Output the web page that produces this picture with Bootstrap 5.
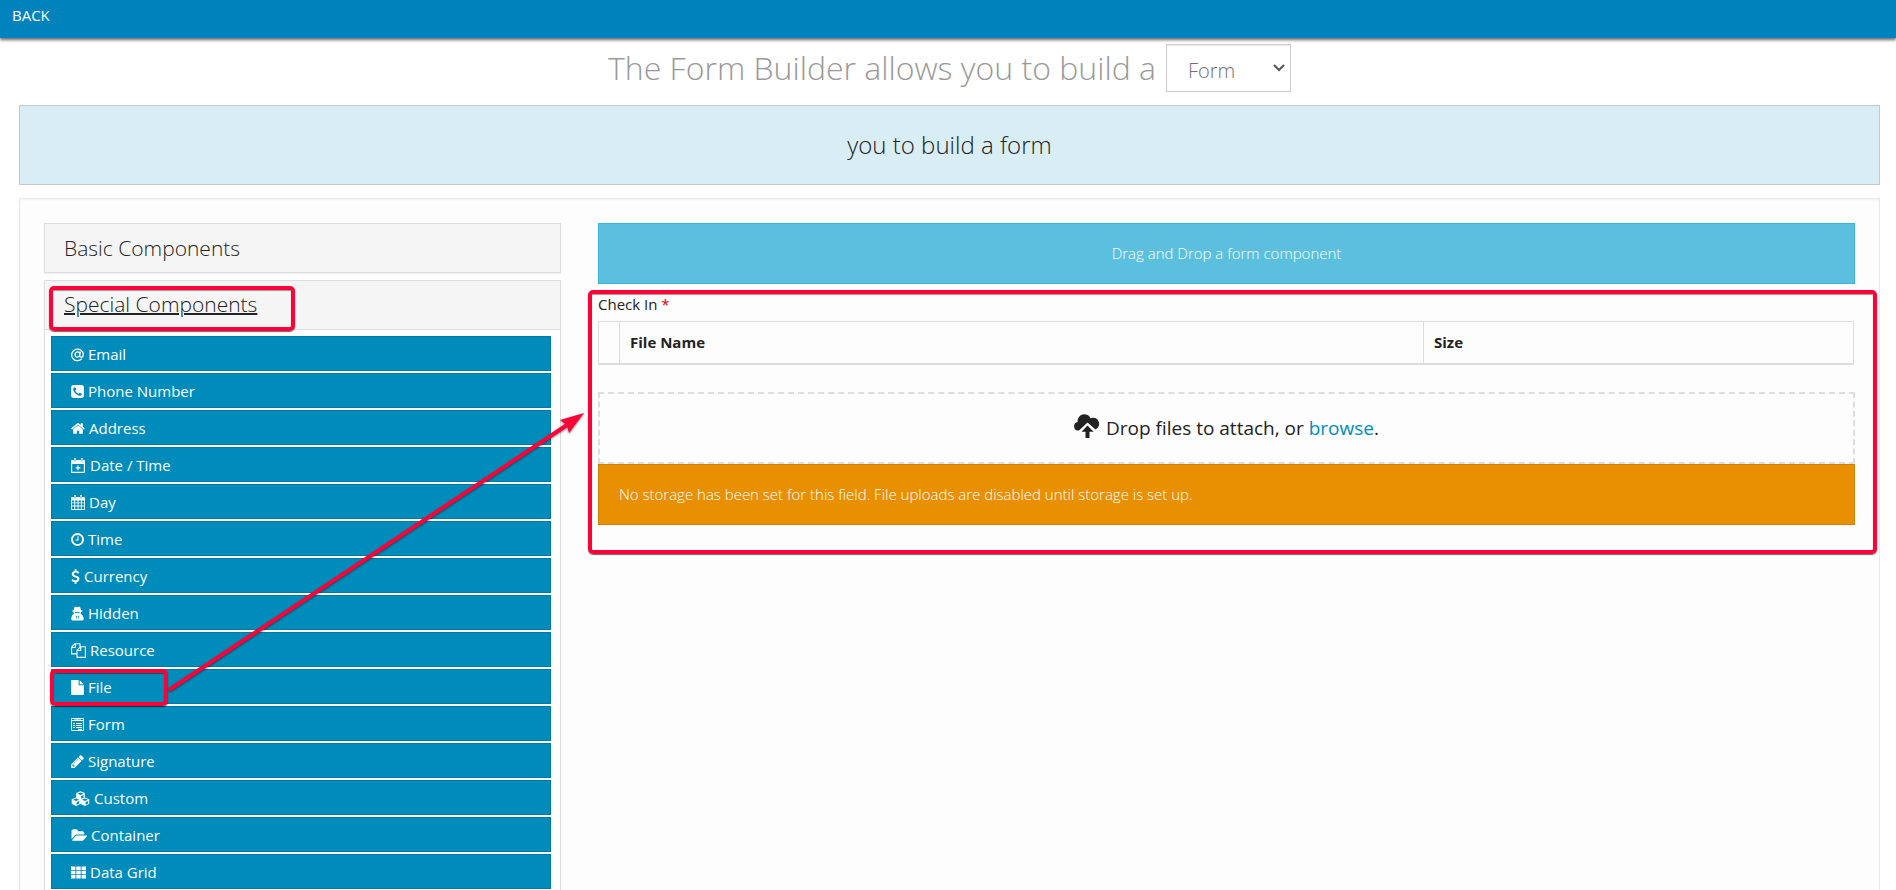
<!DOCTYPE html>
<html lang="en">
<head>
<meta charset="utf-8">
<meta name="viewport" content="width=device-width, initial-scale=1">
<title>Form Builder</title>
<link rel="stylesheet" href="https://cdn.jsdelivr.net/npm/bootstrap@5.3.0/dist/css/bootstrap.min.css">
<style>
body { font: 400 15px/21px "Open Sans", sans-serif; color: #222; background: #fff; }
.topbar { height: 38px; padding: 5px 12px; background: #0083bc; box-shadow: 0 2px 3px rgba(0,0,0,.6); }
.topbar a { color: #fff; font-size: 15px; }
.page-main { margin: 6px 16px 0 19px; }
.page-title { font-size: 32px; line-height: 48px; font-weight: 300; color: #999; gap: 10px; margin: 0; }
.kind-select { width: 125px; height: 48px; padding: 2px 21px 0; font-size: 20px; font-weight: 300; color: #6f6f6f; border: 1px solid #ccc; border-radius: 0; box-shadow: inset 0 1px 1px rgba(0,0,0,.08); appearance: none; background: #fff url("data:image/svg+xml,%3Csvg xmlns='http://www.w3.org/2000/svg' viewBox='0 0 12 8'%3E%3Cpath d='M1 1l5 5 5-5' fill='none' stroke='%23555' stroke-width='2'/%3E%3C/svg%3E") no-repeat right 5px center / 12px 8px; }
.kind-info { margin-top: 13px; height: 80px; padding-bottom: 2px; font-size: 24px; font-weight: 300; background: #d9edf5; border: 1px solid #c5c9cd; }
.builder { margin-top: 13px; padding: 24px; display: grid; grid-template-columns: 517fr 1257fr; gap: 37px; background: #fdfdfd; border: 1px solid #e8e8e8; box-shadow: inset 0 1px 2px rgba(0,0,0,.05); }
.group-box { border: 1px solid #ddd; background: #fff; box-shadow: 0 1px 1px rgba(0,0,0,.05); }
.group-box + .group-box { margin-top: 7px; }
.group-head { height: 48px; padding: 0 19px; background: #f5f5f5; }
.group-head button { padding: 0; border: 0; background: none; font-size: 21px; line-height: 30px; font-weight: 300; color: #222; }
.group-head.open { border-bottom: 1px solid #ddd; height: 49px; padding-bottom: 2px; }
.group-head.open button { text-decoration: underline; text-decoration-thickness: 2px; }
.group-list { padding: 6px 9px 6px 6px; gap: 2px; }
.comp { display: flex; align-items: center; gap: 4px; height: 35px; width: 100%; padding: 2px 19px 0; border: 1px solid #0079a1; border-radius: 0; background: #008cba; color: #fff; text-align: left; }
.comp svg { height: 15px; flex: none; fill: currentColor; }
.w9 { width: 9px; } .w13 { width: 13px; } .w14 { width: 14px; } .w15 { width: 15px; } .w16 { width: 16px; } .w19 { width: 19px; }
.line-art { fill: none; stroke: #fff; }
.notice { height: 61px; padding: 0 20px; font-weight: 300; color: #fff; }
.drop-zone { background: #5bc0de; border: 1px solid #3db5d8; }
.warn-zone { background: #e99002; border: 1px solid #d08002; }
.field-block { margin-top: 10px; }
.req { color: #eb0000; }
.file-table { margin: 6px 1px 27px 0; width: calc(100% - 1px); table-layout: fixed; border-collapse: collapse; border: 1px solid #ddd; }
.file-table th { border: 1px solid #ddd; border-bottom-width: 2px; height: 42px; padding: 0 10px; font-weight: 700; }
.file-table th:first-child { width: 21px; }
.file-table th:last-child { width: 430px; }
.attach { height: 72px; padding-top: 2px; border: 2px dashed #ddd; font-size: 19px; gap: 6px; }
.attach a { color: #008cba; text-decoration: none; }
.attach svg { width: 26px; height: 26px; margin-bottom: 5px; }
.callout { position: absolute; border: 4px solid #ff0039; border-radius: 5px; box-shadow: 0 1px 1px rgba(0,0,0,.6), inset 0 1px 1px rgba(0,0,0,.4); pointer-events: none; z-index: 3; }
.callout-head { left: 4px; top: 5px; width: 246px; height: 45px; }
.callout-file { left: -1px; top: 0; width: 118px; height: 37px; }
.callout-field { left: -10px; right: -22px; top: -4px; height: 264px; }
.callout-arrow { position: absolute; left: 111px; bottom: -5px; width: 430px; height: 300px; z-index: 3; pointer-events: none; filter: drop-shadow(0 1px 1px rgba(0,0,0,.5)); }
</style>
</head>
<body class="vh-100 overflow-hidden">
<svg class="d-none" aria-hidden="true">
  <symbol id="i-phone" viewBox="128 0 1536 1792"><path d="M1408 1193q0-11-2-16t-18-16.500-40.500-25-47.500-26.500-45.500-25-28.500-15q-5-3-19-13t-25-15-21-5q-15 0-36.500 20.500t-39.500 45-38.500 45-33.500 20.500q-7 0-16.500-3.500t-15.500-6.500-17-9.500-14-8.500q-99-55-170-126.500t-127-170.500q-2-3-8.500-14t-9.500-17-6.500-15.500-3.500-16.500q0-13 20.500-33.500t45-38.500 45-39.500 20.500-36.500q0-10-5-21t-15-25-13-19q-3-6-15-28.500t-25-45.500-26.500-47.500-25-40.500-16.500-18-16-2q-48 0-101 22-46 21-80 94.500t-34 130.500q0 16 2.500 34t5 30.500 9 33 10 29.500 12.500 33 11 30q60 164 216.500 320.500t320.500 216.500q6 2 30 11t33 12.500 29.500 10 33 9 30.500 5 34 2.500q57 0 130.500-34t94.500-80q22-53 22-101zm256-777v960q0 119-84.500 203.500t-203.500 84.500h-960q-119 0-203.500-84.500t-84.500-203.500v-960q0-119 84.500-203.500t203.500-84.500h960q119 0 203.500 84.500t84.500 203.500z"/></symbol>
  <symbol id="i-home" viewBox="64 0 1664 1792"><path d="M1472 992v480q0 26-19 45t-45 19h-384v-384h-256v384h-384q-26 0-45-19t-19-45v-480q0-1 .5-3t.5-3l575-474 575 474q1 2 1 6zm223-69l-62 74q-8 9-21 11h-3q-13 0-21-7l-692-577-692 577q-12 8-24 7-13-2-21-11l-62-74q-8-10-7-23.500t11-21.500l719-599q32-26 76-26t76 26l244 204v-195q0-14 9-23t23-9h192q14 0 23 9t9 23v408l219 182q10 8 11 21.500t-7 23.500z"/></symbol>
  <symbol id="i-clock" viewBox="128 0 1536 1792"><path d="M1024 544v448q0 14-9 23t-23 9h-320q-14 0-23-9t-9-23v-64q0-14 9-23t23-9h224v-352q0-14 9-23t23-9h64q14 0 23 9t9 23zm416 352q0-148-73-273t-198-198-273-73-273 73-198 198-73 273 73 273 198 198 273 73 273-73 198-198 73-273zm224 0q0 209-103 385.500t-279.500 279.500-385.500 103-385.500-103-279.500-279.500-103-385.500 103-385.500 279.500-279.500 385.500-103 385.500 103 279.500 279.500 103 385.500z"/></symbol>
  <symbol id="i-dollar" viewBox="384 0 1024 1792"><path d="M1362 1185q0 153-99.500 263.500t-258.500 136.500v175q0 14-9 23t-23 9h-135q-13 0-22.500-9.500t-9.500-22.500v-175q-66-9-127.500-31t-101.500-44.500-74-48-46.500-37.500-17.500-18q-17-21-2-41l103-135q7-10 23-12 15-2 24 9l2 2q113 99 243 125 37 8 74 8 81 0 142.500-43t61.500-122q0-28-15-53t-33.500-42-58.500-37.500-66-32-80-32.500q-39-16-61.500-25t-61.500-26.500-62.500-31-56.500-35.500-53.500-42.500-43.500-49-35.500-58-21-66.500-8.500-78q0-138 98-242t255-134v-180q0-13 9.500-22.500t22.500-9.500h135q14 0 23 9t9 23v176q57 6 110.500 23t87 33.500 63.500 37.500 39 29 15 14q17 18 5 38l-81 146q-8 15-23 16-14 3-27-7-3-3-14.500-12t-39-26.500-58.500-32-74.500-26-85.500-11.500q-95 0-155 43t-60 111q0 26 8.500 48t29.500 41.500 39.500 33 56 31 60.500 27 70 27.500q53 20 81 31.500t76 35 75.500 42.500 62 50 53 63.500 31.500 76.500 13 94z"/></symbol>
  <symbol id="i-file" viewBox="128 0 1536 1792"><path d="M1152 512v-472q22 14 36 28l408 408q14 14 28 36h-472zm-128 32q0 40 28 68t68 28h544v1056q0 40-28 68t-68 28h-1344q-40 0-68-28t-28-68v-1600q0-40 28-68t68-28h800v544z"/></symbol>
  <symbol id="i-pencil" viewBox="128 0 1536 1792"><path d="M491 1536l91-91-235-235-91 91v107h128v128h107zm523-928q0-22-22-22-10 0-17 7l-542 542q-7 7-7 17 0 22 22 22 10 0 17-7l542-542q7-7 7-17zm-54-192l416 416-832 832h-416v-416zm683 96q0 53-37 90l-166 166-416-416 166-165q36-38 90-38 53 0 91 38l235 234q37 39 37 91z"/></symbol>
  <symbol id="i-folder" viewBox="0 0 1943 1792"><path d="M1943 952q0 31-31 66l-336 396q-43 51-120.500 86.500t-143.500 35.500h-1088q-34 0-60.500-13t-26.500-43q0-31 31-66l336-396q43-51 120.500-86.500t143.500-35.500h1088q34 0 60.500 13t26.500 43zm-343-344v160h-832q-94 0-197 47.500t-164 119.500l-337 396-5 6q0-4-.5-12.500t-.5-12.500v-960q0-92 66-158t158-66h320q92 0 158 66t66 158v32h544q92 0 158 66t66 158z"/></symbol>
  <symbol id="i-at" viewBox="0 0 13 15"><path class="line-art" stroke-width="1.300" d="M10.800 11.800A5.800 5.800 0 1 1 12.300 7.500C12.300 9.200 11.300 10.200 10.200 10.200S8.500 9.400 8.700 8.500L9.400 4.700M8.900 7.100C8.900 9 7.700 10.200 6.200 10.200S3.900 9 4.100 7.600 5.300 4.900 6.800 4.900 9 5.900 8.900 7.100Z"/></symbol>
  <symbol id="i-plus" viewBox="0 0 15 15"><path fill-rule="evenodd" d="M1 2h2V.800Q3 0 4 0t1 .800V2h5V.800Q10 0 11 0t1 .800V2h1q1 0 1 1v11q0 1-1 1H1q-1 0-1-1V3q0-1 1-1zm.200 4v7.800h11.600V6zM3.600 1v2.500h.8V1zm7 0v2.500h.8V1zM6.400 7.500h1.200v1.800h1.800v1.200H7.600v1.800H6.400v-1.800H4.600V9.300h1.800z"/></symbol>
  <symbol id="i-cal" viewBox="0 0 14 15"><path fill-rule="evenodd" d="M1 2h2V.800Q3 0 4 0t1 .800V2h4V.800Q9 0 10 0t1 .800V2h2q1 0 1 1v11q0 1-1 1H1q-1 0-1-1V3q0-1 1-1zM3.600 1v2.500h.8V1zm6 0v2.500h.8V1zM1 5.500v2h2.300v-2zm3.200 0v2h2.400v-2zm3.300 0v2h2.400v-2zm3.300 0v2h2.300v-2zM1 8.300v2.300h2.300V8.300zm3.200 0v2.300h2.400V8.300zm3.300 0v2.300h2.400V8.300zm3.300 0v2.300h2.300V8.300zM1 11.500V14h2.300v-2.500zm3.200 0V14h2.400v-2.500zm3.300 0V14h2.400v-2.500zm3.300 0V14h2.300v-2.500z"/></symbol>
  <symbol id="i-secret" viewBox="0 0 13 15"><path fill-rule="evenodd" d="M4.600.800Q5.500 1.200 6.300 1.200T8 .800Q9 .300 9.500 2l.5 2q1.600.4 1.600.9 0 .5-1.600.9.100 1.100-.5 2.100 3 .8 3.200 5.100 0 1.400-1.500 1.400H1.600Q.200 14.400.200 13 .400 8.700 3 7.900 2.500 6.900 2.600 5.800 1 5.400 1 4.900t1.700-.9l.5-2Q3.600.300 4.600.800zM3.800 6l.4 1.200 1.600-.1.400-.8.500.8 1.600.1L8.700 6zm.700 3.200.9 4.200.5-2.900zm3.600 0L6.700 10.500l.6 2.900z"/></symbol>
  <symbol id="i-files" viewBox="0 0 15 15"><path class="line-art" stroke-width="1.100" stroke-linejoin="round" d="M6 10.900H.600V4.200L4 .7h5v3M4.300.800v3.700H.800M9.800 3.700h4.600v10.700H6V7.200zM9.700 3.900v3.600H6.200"/></symbol>
  <symbol id="i-form" viewBox="0 0 13 15"><path class="line-art" d="M.500 1.500h12v12H.500zM1 3.500h11M3 1.500l2 2 1.500-1.500L8 3.500l2-2M2 6.500h2m1 0h6M2 8.500h2m1 0h6M2 10.500h2m1 0h6M7 12.300h4"/></symbol>
  <symbol id="i-cubes" viewBox="0 0 19 15"><path fill-rule="evenodd" d="M9.500.300l4.300 1.800v4.300l4.500 1.800v4.600L14 15l-4.500-2L5 15 .7 12.800V8.200l4.500-1.800V2.100zM6.500 2.700l3 1.200 3-1.200-3-1.200zm3.600 2.500v2.500l2.400-1V4zM2 8.800l3 1.300 3-1.300-3-1.200zm3.600 2.500v2.500l2.500-1.200V10zm5.400-2.500l3 1.300 3-1.300-3-1.200zm3.600 2.500v2.500l2.500-1.200V10z"/></symbol>
  <symbol id="i-grid" viewBox="0 0 15 15"><path d="M0 1.500h4.400v3.400H0zm5.300 0h4.400v3.400H5.300zm5.300 0H15v3.400h-4.400zM0 5.800h4.400v3.400H0zm5.300 0h4.400v3.400H5.300zm5.300 0H15v3.400h-4.400zM0 10.100h4.400v3.400H0zm5.300 0h4.400v3.400H5.300zm5.300 0H15v3.400h-4.400z"/></symbol>
</svg>

<header class="topbar"><a href="#" class="text-decoration-none">BACK</a></header>

<main class="page-main">
  <h1 class="page-title d-flex justify-content-center"><label for="kind">The Form Builder allows you to build a</label>
    <select id="kind" class="kind-select"><option>Form</option><option>Wizard</option></select></h1>
  <div class="kind-info d-flex align-items-center justify-content-center">you to build a form</div>

  <section class="builder">
    <aside>
      <div class="group-box"><div class="group-head d-flex align-items-center"><button type="button">Basic Components</button></div></div>
      <div class="group-box position-relative">
        <div class="group-head open d-flex align-items-center"><button type="button">Special Components</button></div>
        <span class="callout callout-head"></span>
        <div class="group-list d-flex flex-column">
          <button class="comp" type="button"><svg class="w13"><use href="#i-at"/></svg>Email</button>
          <button class="comp" type="button"><svg class="w13"><use href="#i-phone"/></svg>Phone Number</button>
          <button class="comp" type="button"><svg class="w14"><use href="#i-home"/></svg>Address</button>
          <button class="comp" type="button"><svg class="w15"><use href="#i-plus"/></svg>Date / Time</button>
          <button class="comp" type="button"><svg class="w14"><use href="#i-cal"/></svg>Day</button>
          <button class="comp" type="button"><svg class="w13"><use href="#i-clock"/></svg>Time</button>
          <button class="comp" type="button"><svg class="w9"><use href="#i-dollar"/></svg>Currency</button>
          <button class="comp" type="button"><svg class="w13"><use href="#i-secret"/></svg>Hidden</button>
          <button class="comp" type="button"><svg class="w15"><use href="#i-files"/></svg>Resource</button>
          <div class="position-relative">
            <button class="comp" type="button"><svg class="w13"><use href="#i-file"/></svg>File</button>
            <span class="callout callout-file"></span>
            <svg class="callout-arrow" viewBox="0 0 430 300"><path d="M7 281L405 16" stroke="#ff0039" stroke-width="4"/><path d="M422 4L398 11 405 16 407 24z" fill="#ff0039"/></svg>
          </div>
          <button class="comp" type="button"><svg class="w13"><use href="#i-form"/></svg>Form</button>
          <button class="comp" type="button"><svg class="w13"><use href="#i-pencil"/></svg>Signature</button>
          <button class="comp" type="button"><svg class="w19"><use href="#i-cubes"/></svg>Custom</button>
          <button class="comp" type="button"><svg class="w16"><use href="#i-folder"/></svg>Container</button>
          <button class="comp" type="button"><svg class="w15"><use href="#i-grid"/></svg>Data Grid</button>
        </div>
      </div>
    </aside>

    <div>
      <div class="notice drop-zone d-flex align-items-center justify-content-center">Drag and Drop a form component</div>
      <div class="field-block position-relative">
        <span class="callout callout-field"></span>
        <div>Check In <span class="req">*</span></div>
        <table class="file-table"><thead><tr><th></th><th>File Name</th><th>Size</th></tr></thead></table>
        <div class="attach d-flex align-items-center justify-content-center">
          <svg viewBox="0 0 26 26" fill="#222"><path d="M4 17.500A4.300 4.300 0 0 1 3.600 9 6.800 6.800 0 0 1 16.500 5.200 5.800 5.800 0 1 1 21.500 16.400L13.500 9.500 5 17.500zM13.500 12.500l6 6.200h-4V25h-4v-6.300h-4z"/></svg>
          <span>Drop files to attach, or <a href="#">browse</a>.</span>
        </div>
        <div class="notice warn-zone d-flex align-items-center">No storage has been set for this field. File uploads are disabled until storage is set up.</div>
      </div>
    </div>
  </section>
</main>
<script src="https://cdn.jsdelivr.net/npm/bootstrap@5.3.0/dist/js/bootstrap.bundle.min.js"></script>
</body>
</html>
